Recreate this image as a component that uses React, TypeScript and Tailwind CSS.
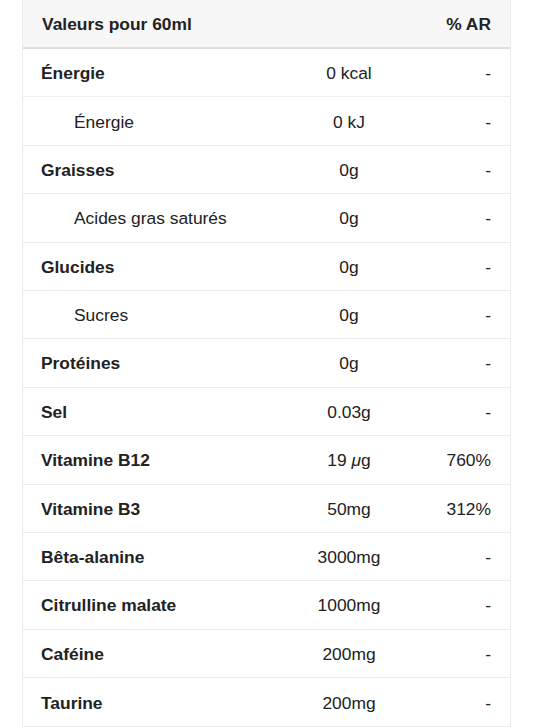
import type { ReactNode } from 'react';

type Row = { label: string; amount: ReactNode; ar: string; sub?: boolean };

const ROWS: Row[] = [
  { label: 'Énergie', amount: '0 kcal', ar: '-' },
  { label: 'Énergie', amount: '0 kJ', ar: '-', sub: true },
  { label: 'Graisses', amount: '0g', ar: '-' },
  { label: 'Acides gras saturés', amount: '0g', ar: '-', sub: true },
  { label: 'Glucides', amount: '0g', ar: '-' },
  { label: 'Sucres', amount: '0g', ar: '-', sub: true },
  { label: 'Protéines', amount: '0g', ar: '-' },
  { label: 'Sel', amount: '0.03g', ar: '-' },
  {
    label: 'Vitamine B12',
    amount: (
      <>
        19 <i>μ</i>g
      </>
    ),
    ar: '760%',
  },
  { label: 'Vitamine B3', amount: '50mg', ar: '312%' },
  { label: 'Bêta-alanine', amount: '3000mg', ar: '-' },
  { label: 'Citrulline malate', amount: '1000mg', ar: '-' },
  { label: 'Caféine', amount: '200mg', ar: '-' },
  { label: 'Taurine', amount: '200mg', ar: '-' },
];

export default function App() {
  return (
    <div className="min-h-screen bg-white pl-[22px] pr-[22px] font-['Liberation_Sans',Arial,sans-serif] text-[17.4px] text-[#222]">
      <div className="border-x border-b border-[#ececec]">
        <div className="grid h-[49px] grid-cols-[1fr_122px_100px] items-center border-b-2 border-[#dedede] bg-[#f7f7f7] pt-[2px] font-bold">
          <div className="pl-[19px]">Valeurs pour 60ml</div>
          <div />
          <div className="pr-[19px] text-right">% AR</div>
        </div>
        {ROWS.map((r, i) => (
          <div
            key={i}
            className={`grid h-[48.4px] grid-cols-[1fr_122px_100px] items-center pt-[1px] ${i < ROWS.length - 1 ? 'border-b border-[#ececec]' : ''}`}
          >
            <div className={r.sub ? 'pl-[51px]' : 'pl-[18px] font-bold'}>{r.label}</div>
            <div className="text-center">{r.amount}</div>
            <div className="pr-[19px] text-right">{r.ar}</div>
          </div>
        ))}
      </div>
    </div>
  );
}
